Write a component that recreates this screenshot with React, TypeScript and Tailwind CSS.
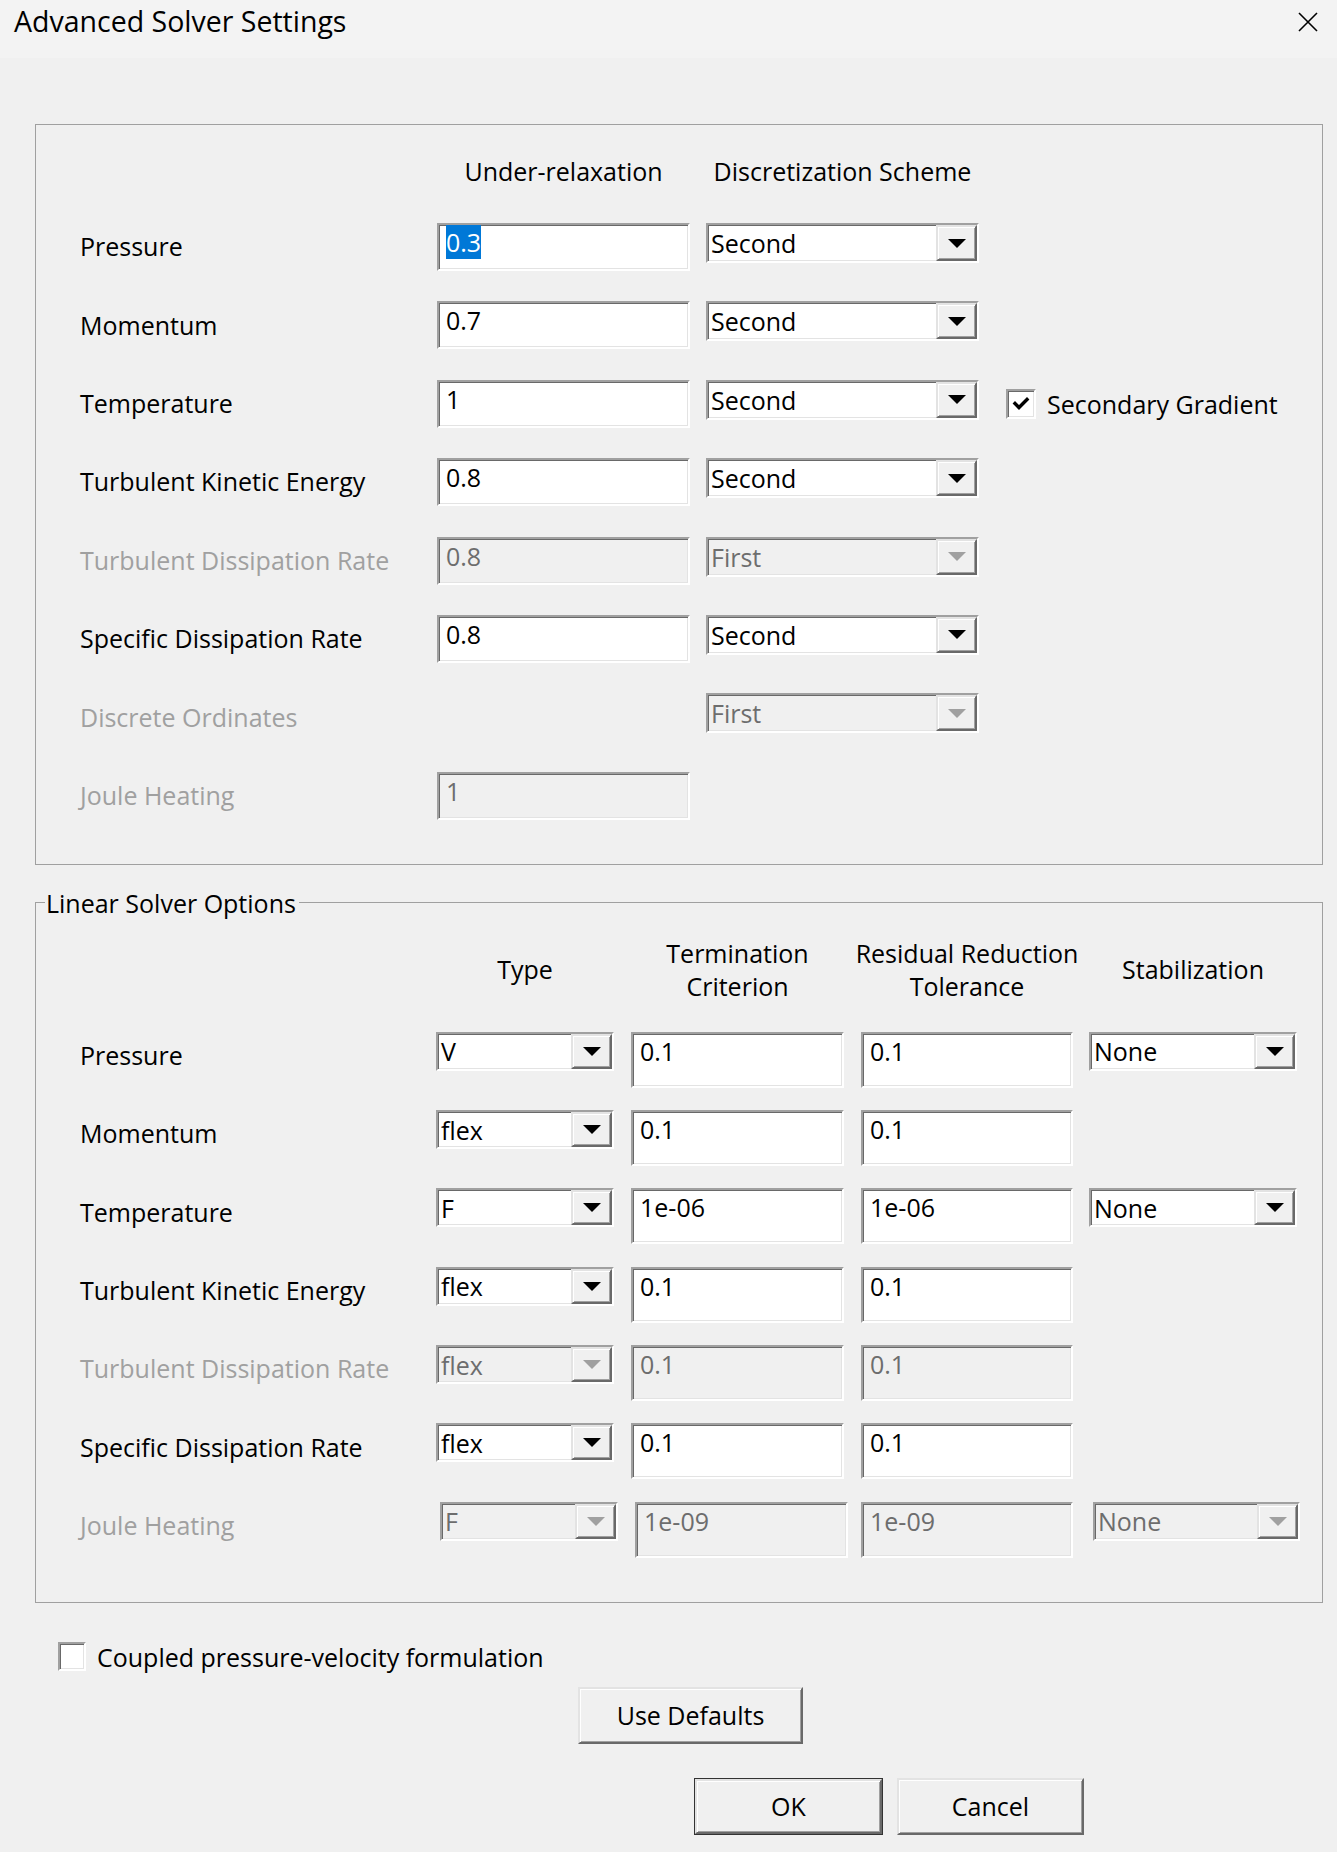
import React from 'react';

const SUNKEN =
  'border-2 border-t-[#a0a0a0] border-l-[#a0a0a0] border-b-white border-r-white shadow-[inset_1px_1px_0_#696969,inset_-1px_-1px_0_#e3e3e3]';
const RAISED =
  'border-2 border-t-[#e3e3e3] border-l-[#e3e3e3] border-b-[#696969] border-r-[#696969] shadow-[inset_1px_1px_0_#ffffff,inset_-1px_-1px_0_#a0a0a0]';

function TextBox({ value, disabled, selected, className }: { value: string; disabled?: boolean; selected?: boolean; className: string }) {
  return (
    <div className={`${SUNKEN} ${disabled ? 'bg-[#f0f0f0] text-[#6d6d6d]' : 'bg-white text-black'} pl-[7px] leading-[34px] shrink-0 ${className}`}>
      {selected ? <span className="bg-[#0078d7] text-white">{value}</span> : value}
    </div>
  );
}

function Combo({ value, disabled, className }: { value: string; disabled?: boolean; className: string }) {
  return (
    <div className={`${SUNKEN} ${disabled ? 'bg-[#f0f0f0] text-[#6d6d6d]' : 'bg-white text-black'} flex items-stretch shrink-0 ${className}`}>
      <div className="flex-1 flex items-center pl-[3px] leading-[34px]">{value}</div>
      <div className={`${RAISED} w-[41px] bg-[#f0f0f0] flex items-center justify-center`}>
        <svg width="18" height="9" viewBox="0 0 18 9">
          <path d="M0 0H18L9 9Z" fill={disabled ? '#a0a0a0' : '#000000'} />
        </svg>
      </div>
    </div>
  );
}

function CheckBox({ checked, className }: { checked?: boolean; className: string }) {
  return (
    <div className={`${SUNKEN} bg-white flex items-center justify-center shrink-0 ${className}`}>
      {checked && (
        <svg width="18" height="16" viewBox="0 0 18 16">
          <path d="M3 7.5L7 11.5L15 3.5" fill="none" stroke="#000" strokeWidth="3.4" strokeLinecap="square" />
        </svg>
      )}
    </div>
  );
}

type RelaxRow = { label: string; value?: string; scheme?: string; disabled?: boolean; selected?: boolean; secondary?: boolean };

const relaxRows: RelaxRow[] = [
  { label: 'Pressure', value: '0.3', scheme: 'Second', selected: true },
  { label: 'Momentum', value: '0.7', scheme: 'Second' },
  { label: 'Temperature', value: '1', scheme: 'Second', secondary: true },
  { label: 'Turbulent Kinetic Energy', value: '0.8', scheme: 'Second' },
  { label: 'Turbulent Dissipation Rate', value: '0.8', scheme: 'First', disabled: true },
  { label: 'Specific Dissipation Rate', value: '0.8', scheme: 'Second' },
  { label: 'Discrete Ordinates', scheme: 'First', disabled: true },
  { label: 'Joule Heating', value: '1', disabled: true },
];

type SolverRow = { label: string; type: string; term: string; resid: string; stab?: string; disabled?: boolean };

const solverRows: SolverRow[] = [
  { label: 'Pressure', type: 'V', term: '0.1', resid: '0.1', stab: 'None' },
  { label: 'Momentum', type: 'flex', term: '0.1', resid: '0.1' },
  { label: 'Temperature', type: 'F', term: '1e-06', resid: '1e-06', stab: 'None' },
  { label: 'Turbulent Kinetic Energy', type: 'flex', term: '0.1', resid: '0.1' },
  { label: 'Turbulent Dissipation Rate', type: 'flex', term: '0.1', resid: '0.1', disabled: true },
  { label: 'Specific Dissipation Rate', type: 'flex', term: '0.1', resid: '0.1' },
];

export default function App() {
  return (
    <div className="w-full min-h-[1852px] bg-[#f0f0f0] text-black text-[25px] font-['Open_Sans',sans-serif]">
      {/* title bar */}
      <div className="h-[58px] bg-[#f3f3f3] flex justify-between">
        <div className="pl-[14px] pt-[2px] text-[28.5px] leading-[39px]">Advanced Solver Settings</div>
        <svg className="mt-[12px] mr-[19px]" width="20" height="20" viewBox="0 0 20 20">
          <path d="M1 1L19 19M19 1L1 19" stroke="#000" strokeWidth="1.6" />
        </svg>
      </div>

      {/* relaxation / discretization group */}
      <div className="ml-[35px] mr-[14px] mt-[66px] border border-[#a0a0a0] pl-[44px] pb-[44px]">
        <div className="flex h-[98px] pt-[29px] leading-[34px]">
          <div className="w-[357px]" />
          <div className="w-[253px] text-center">Under-relaxation</div>
          <div className="w-[273px] ml-[16px] text-center">Discretization Scheme</div>
        </div>
        {relaxRows.map((r, i) => (
          <div key={r.label} className={`flex items-start ${i < relaxRows.length - 1 ? 'h-[78.4px]' : ''}`}>
            <div className={`w-[357px] h-[48px] flex items-center shrink-0 ${r.disabled ? 'text-[#a0a0a0]' : ''}`}>{r.label}</div>
            {r.value ? (
              <TextBox value={r.value} disabled={r.disabled} selected={r.selected} className="w-[253px] h-[48px]" />
            ) : (
              <div className="w-[253px] shrink-0" />
            )}
            {r.scheme && <Combo value={r.scheme} disabled={r.disabled} className="ml-[16px] w-[273px] h-[40px]" />}
            {r.secondary && (
              <div className="ml-[27px] h-[48px] flex items-center">
                <CheckBox checked className="w-[30px] h-[30px]" />
                <span className="ml-[11px] leading-[34px]">Secondary Gradient</span>
              </div>
            )}
          </div>
        ))}
      </div>

      {/* linear solver options group */}
      <fieldset className="ml-[35px] mr-[14px] mt-[21px] border border-[#a0a0a0] pl-[44px] pb-[44px]">
        <legend className="-ml-[35px] pl-[1px] pr-[3px] leading-[34px]">Linear Solver Options</legend>
        <div className="pt-[17px]">
          <div className="flex items-center h-[66px] leading-[33px] text-center">
            <div className="w-[356px] shrink-0" />
            <div className="w-[178px] shrink-0 flex flex-col items-center">Type</div>
            <div className="w-[213px] ml-[17px] shrink-0 flex flex-col items-center whitespace-nowrap">
              <span>Termination</span>
              <span>Criterion</span>
            </div>
            <div className="w-[212px] ml-[17px] shrink-0 flex flex-col items-center whitespace-nowrap">
              <span>Residual Reduction</span>
              <span>Tolerance</span>
            </div>
            <div className="w-[208px] ml-[16px] shrink-0 flex flex-col items-center">Stabilization</div>
          </div>
          <div className="mt-[29px]">
            {solverRows.map((r) => (
              <div key={r.label} className="flex items-start h-[78.33px]">
                <div className={`w-[356px] h-[48px] flex items-center shrink-0 ${r.disabled ? 'text-[#a0a0a0]' : ''}`}>{r.label}</div>
                <Combo value={r.type} disabled={r.disabled} className="w-[178px] h-[39px]" />
                <TextBox value={r.term} disabled={r.disabled} className="ml-[17px] w-[213px] h-[56px]" />
                <TextBox value={r.resid} disabled={r.disabled} className="ml-[17px] w-[212px] h-[56px]" />
                {r.stab && <Combo value={r.stab} disabled={r.disabled} className="ml-[16px] w-[208px] h-[39px]" />}
              </div>
            ))}
            <div className="flex items-start">
              <div className="w-[356px] h-[48px] flex items-center shrink-0 text-[#a0a0a0]">Joule Heating</div>
              <Combo value="F" disabled className="ml-[4px] w-[178px] h-[39px]" />
              <TextBox value="1e-09" disabled className="ml-[17px] w-[213px] h-[56px]" />
              <TextBox value="1e-09" disabled className="ml-[13px] w-[212px] h-[56px]" />
              <Combo value="None" disabled className="ml-[20px] w-[207px] h-[39px]" />
            </div>
          </div>
        </div>
      </fieldset>

      {/* bottom options */}
      <div className="mt-[37px] ml-[58px] h-[34px] flex items-center">
        <CheckBox className="w-[28px] h-[29px]" />
        <span className="ml-[11px] leading-[34px]">Coupled pressure-velocity formulation</span>
      </div>
      <button className={`${RAISED} mt-[13px] ml-[578px] w-[225px] h-[57px] bg-[#f0f0f0] block leading-[34px]`}>Use Defaults</button>
      <div className="mt-[34px] ml-[694px] flex gap-[14px]">
        <div className="border border-[#333333]">
          <button className={`${RAISED} w-[187px] h-[55px] bg-[#f0f0f0] block leading-[34px]`}>OK</button>
        </div>
        <button className={`${RAISED} w-[187px] h-[57px] bg-[#f0f0f0] block leading-[34px]`}>Cancel</button>
      </div>
    </div>
  );
}
